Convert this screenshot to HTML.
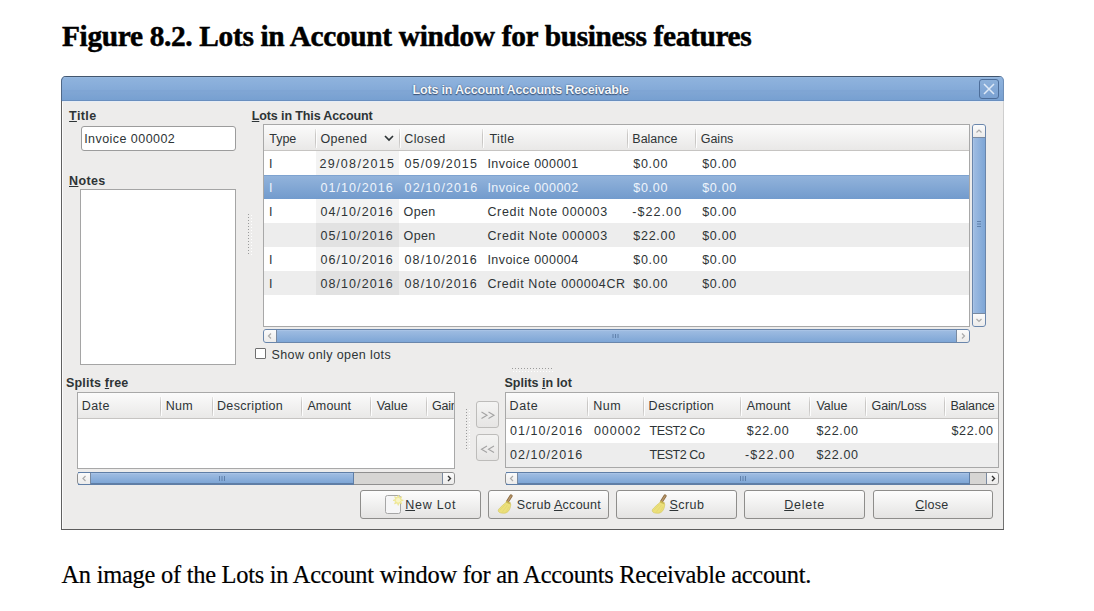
<!DOCTYPE html>
<html><head><meta charset="utf-8"><style>
html,body{margin:0;padding:0;background:#fff;font-family:"Liberation Sans",sans-serif;width:1094px;height:611px;overflow:hidden;position:relative}
div,svg{position:absolute}
.t{position:absolute;white-space:pre}
u{text-decoration:underline;text-underline-offset:1px;text-decoration-thickness:1px}
</style></head><body>
<div style="left:61px;top:90px;width:943px;height:440px;background:#edeceb"></div>
<div style="left:61px;top:90px;width:1px;height:440px;background:#606060"></div>
<div style="left:62px;top:101px;width:1px;height:428px;background:#fbfbfb"></div>
<div style="left:1003px;top:90px;width:1px;height:440px;background:linear-gradient(#d6d6d6,#a0a0a0 40%,#707070)"></div>
<div style="left:61px;top:529px;width:943px;height:1px;background:#5c5c5c"></div>
<div style="left:61px;top:76px;width:943px;height:25px;border-radius:5px 5px 0 0;box-shadow:inset 1px 0 0 #4f6786,inset -1px 0 0 #6f8fb8;background:linear-gradient(#42566e 0,#42566e 1px,#9dbcdf 1px,#8fb3dd 2px,#84aad8 14px,#7fa5d4 14px,#7fa5d4 16px,#80a6d4 16px,#77a0d1 24px,#6a8fbf 24px,#6a8fbf 25px)"></div>
<div style="left:62px;top:101px;width:941px;height:1px;background:#e6edf6"></div>
<div style="left:979px;top:79px;width:20px;height:20px;border:1px solid #4d6e9a;border-radius:3px;box-sizing:border-box;background:linear-gradient(#8cb0da,#7aa1d2)"></div>
<svg style="position:absolute;left:979px;top:79px" width="20" height="20"><path d="M5 5L15 15M15 5L5 15" stroke="#dfeaf7" stroke-width="1.5"/></svg>
<div style="left:81px;top:126px;width:155px;height:25px;background:#fff;border:1px solid #9c9c9c;border-radius:3px;box-sizing:border-box"></div>
<div style="left:80px;top:189px;width:156px;height:176px;background:#fff;border:1px solid #a5a5a5;box-sizing:border-box"></div>
<div style="left:263px;top:124px;width:707px;height:203px;background:#fff;border:1px solid #a8a8a8;box-sizing:border-box"></div>
<div style="left:264px;top:125px;width:705px;height:26px;background:linear-gradient(#fbfbfb,#e9e8e7);border-bottom:1px solid #c6c4c2;box-sizing:border-box"></div>
<div style="left:315px;top:129px;width:1px;height:19px;background:linear-gradient(#e6e5e4,#c9c7c5 30%,#c9c7c5 70%,#dddcdb)"></div>
<div style="left:316px;top:129px;width:1px;height:19px;background:#fdfdfd"></div>
<div style="left:399px;top:129px;width:1px;height:19px;background:linear-gradient(#e6e5e4,#c9c7c5 30%,#c9c7c5 70%,#dddcdb)"></div>
<div style="left:400px;top:129px;width:1px;height:19px;background:#fdfdfd"></div>
<div style="left:482px;top:129px;width:1px;height:19px;background:linear-gradient(#e6e5e4,#c9c7c5 30%,#c9c7c5 70%,#dddcdb)"></div>
<div style="left:483px;top:129px;width:1px;height:19px;background:#fdfdfd"></div>
<div style="left:627px;top:129px;width:1px;height:19px;background:linear-gradient(#e6e5e4,#c9c7c5 30%,#c9c7c5 70%,#dddcdb)"></div>
<div style="left:628px;top:129px;width:1px;height:19px;background:#fdfdfd"></div>
<div style="left:695px;top:129px;width:1px;height:19px;background:linear-gradient(#e6e5e4,#c9c7c5 30%,#c9c7c5 70%,#dddcdb)"></div>
<div style="left:696px;top:129px;width:1px;height:19px;background:#fdfdfd"></div>
<div style="left:264px;top:151px;width:705px;height:24px;background:#ffffff"></div>
<div style="left:316px;top:151px;width:83px;height:24px;background:#f3f3f3"></div>
<div style="left:264px;top:175px;width:705px;height:24px;background:linear-gradient(#92b3db,#729bcd);border-top:1px solid #7ea3d0;box-sizing:border-box"></div>
<div style="left:264px;top:199px;width:705px;height:24px;background:#ffffff"></div>
<div style="left:316px;top:199px;width:83px;height:24px;background:#f3f3f3"></div>
<div style="left:264px;top:223px;width:705px;height:24px;background:#ededed"></div>
<div style="left:316px;top:223px;width:83px;height:24px;background:#e2e2e2"></div>
<div style="left:264px;top:247px;width:705px;height:24px;background:#ffffff"></div>
<div style="left:316px;top:247px;width:83px;height:24px;background:#f3f3f3"></div>
<div style="left:264px;top:271px;width:705px;height:24px;background:#ededed"></div>
<div style="left:316px;top:271px;width:83px;height:24px;background:#e2e2e2"></div>
<svg style="position:absolute;left:383px;top:133px" width="12" height="10"><path d="M2 3L6 7L10 3" stroke="#2e3436" stroke-width="1.7" fill="none"/></svg>
<div style="left:972px;top:124px;width:14px;height:203px;border:1px solid #6a86ab;border-radius:3px;box-sizing:border-box;background:linear-gradient(90deg,#b3cbea,#9dbbe1 1px,#7ea6d6)"></div>
<div style="left:973px;top:125px;width:12px;height:13px;background:linear-gradient(#fbfbfb,#ecebea);border-bottom:1px solid #7a8aa0;border-radius:2px 2px 0 0;box-sizing:border-box"></div>
<div style="left:973px;top:313px;width:12px;height:13px;background:linear-gradient(#fbfbfb,#ecebea);border-top:1px solid #7a8aa0;border-radius:0 0 2px 2px;box-sizing:border-box"></div>
<svg style="position:absolute;left:972px;top:124px" width="14" height="203"><path d="M4.5 8.5L7 6L9.5 8.5" stroke="#aaa" stroke-width="1.2" fill="none"/><path d="M4.5 195L7 197.5L9.5 195" stroke="#aaa" stroke-width="1.2" fill="none"/><path d="M5 97.5H9M5 100H9M5 102.5H9" stroke="#5a7aa5" stroke-width="0.9"/></svg>
<div style="left:263px;top:329px;width:707px;height:14px;border:1px solid #6a86ab;border-radius:3px;box-sizing:border-box;background:linear-gradient(#b3cbea,#9dbbe1 1px,#7ea6d6)"></div>
<div style="left:264px;top:330px;width:13px;height:12px;background:linear-gradient(#fbfbfb,#ecebea);border-right:1px solid #7a8aa0;border-radius:2px 0 0 2px;box-sizing:border-box"></div>
<div style="left:956px;top:330px;width:13px;height:12px;background:linear-gradient(#fbfbfb,#ecebea);border-left:1px solid #7a8aa0;border-radius:0 2px 2px 0;box-sizing:border-box"></div>
<svg style="position:absolute;left:263px;top:329px" width="707" height="14"><path d="M8 4.5L5.5 7L8 9.5" stroke="#aaa" stroke-width="1.2" fill="none"/><path d="M699 4.5L701.5 7L699 9.5" stroke="#aaa" stroke-width="1.2" fill="none"/><path d="M350 5V9M352.5 5V9M355 5V9" stroke="#5a7aa5" stroke-width="0.9"/></svg>
<svg style="position:absolute;left:248px;top:214px" width="4" height="42"><path d="M0.5 0V42" stroke="#9a9a9a" stroke-width="1" stroke-dasharray="1 2"/><path d="M3.5 1V42" stroke="#ffffff" stroke-width="1" stroke-dasharray="1 2"/></svg>
<div style="left:255px;top:348px;width:11px;height:11px;background:#fff;border:1px solid #6f6f6f;border-radius:1px;box-sizing:border-box"></div>
<div style="left:77px;top:392px;width:378px;height:77px;background:#fff;border:1px solid #a8a8a8;box-sizing:border-box"></div>
<div style="left:78px;top:393px;width:376px;height:26px;background:linear-gradient(#fbfbfb,#e9e8e7);border-bottom:1px solid #c6c4c2;box-sizing:border-box"></div>
<div style="left:160px;top:397px;width:1px;height:19px;background:linear-gradient(#e6e5e4,#c9c7c5 30%,#c9c7c5 70%,#dddcdb)"></div>
<div style="left:161px;top:397px;width:1px;height:19px;background:#fdfdfd"></div>
<div style="left:212px;top:397px;width:1px;height:19px;background:linear-gradient(#e6e5e4,#c9c7c5 30%,#c9c7c5 70%,#dddcdb)"></div>
<div style="left:213px;top:397px;width:1px;height:19px;background:#fdfdfd"></div>
<div style="left:301px;top:397px;width:1px;height:19px;background:linear-gradient(#e6e5e4,#c9c7c5 30%,#c9c7c5 70%,#dddcdb)"></div>
<div style="left:302px;top:397px;width:1px;height:19px;background:#fdfdfd"></div>
<div style="left:370px;top:397px;width:1px;height:19px;background:linear-gradient(#e6e5e4,#c9c7c5 30%,#c9c7c5 70%,#dddcdb)"></div>
<div style="left:371px;top:397px;width:1px;height:19px;background:#fdfdfd"></div>
<div style="left:426px;top:397px;width:1px;height:19px;background:linear-gradient(#e6e5e4,#c9c7c5 30%,#c9c7c5 70%,#dddcdb)"></div>
<div style="left:427px;top:397px;width:1px;height:19px;background:#fdfdfd"></div>
<div style="left:77px;top:472px;width:378px;height:13px;border:1px solid #8f8f8f;border-radius:3px;box-sizing:border-box;background:#d6d5d3"></div>
<div style="left:78px;top:472px;width:276px;height:13px;background:linear-gradient(#5f7ea6 0,#5f7ea6 1px,#b3cbea 1px,#9dbbe1 2px,#7ea6d6 11px,#5f7ea6 11px);border-right:1px solid #5f7ea6;box-sizing:border-box"></div>
<div style="left:78px;top:473px;width:13px;height:11px;background:linear-gradient(#fbfbfb,#ecebea);border-right:1px solid #7a8aa0;border-radius:2px 0 0 2px;box-sizing:border-box"></div>
<div style="left:442px;top:473px;width:12px;height:11px;background:linear-gradient(#fbfbfb,#ecebea);border-left:1px solid #7a8aa0;border-radius:0 2px 2px 0;box-sizing:border-box"></div>
<svg style="position:absolute;left:77px;top:472px" width="378" height="13"><path d="M8.5 4L6 6.5L8.5 9" stroke="#aaa" stroke-width="1.2" fill="none"/><path d="M371 4L373.5 6.5L371 9" stroke="#333" stroke-width="1.4" fill="none"/><path d="M142.5 4V9M145 4V9M147.5 4V9" stroke="#5a7aa5" stroke-width="0.9"/></svg>
<div style="left:476px;top:401px;width:23px;height:27px;border:1px solid #bdbcba;border-radius:3px;box-sizing:border-box;background:linear-gradient(#f4f4f3,#e6e5e4)"></div>
<div style="left:476px;top:434px;width:23px;height:27px;border:1px solid #bdbcba;border-radius:3px;box-sizing:border-box;background:linear-gradient(#f4f4f3,#e6e5e4)"></div>
<svg style="position:absolute;left:476px;top:401px" width="24" height="60"><path d="M5.5 11L11 14.2L5.5 17.4M12.5 11L18 14.2L12.5 17.4" stroke="#a3a3a3" stroke-width="1.1" fill="none"/><path d="M11 45L5.5 48.2L11 51.4M18 45L12.5 48.2L18 51.4" stroke="#a3a3a3" stroke-width="1.1" fill="none"/></svg>
<svg style="position:absolute;left:466px;top:409px" width="4" height="41"><path d="M0.5 0V41" stroke="#9a9a9a" stroke-width="1" stroke-dasharray="1 2"/><path d="M3.5 1V41" stroke="#ffffff" stroke-width="1" stroke-dasharray="1 2"/></svg>
<svg style="position:absolute;left:512px;top:368px" width="42" height="4"><path d="M0 0.5H42" stroke="#9a9a9a" stroke-width="1" stroke-dasharray="1 2"/><path d="M1 3.5H42" stroke="#ffffff" stroke-width="1" stroke-dasharray="1 2"/></svg>
<div style="left:505px;top:392px;width:494px;height:76px;background:#fff;border:1px solid #a8a8a8;box-sizing:border-box"></div>
<div style="left:506px;top:393px;width:492px;height:26px;background:linear-gradient(#fbfbfb,#e9e8e7);border-bottom:1px solid #c6c4c2;box-sizing:border-box"></div>
<div style="left:506px;top:443px;width:492px;height:24px;background:#ededed"></div>
<div style="left:587px;top:397px;width:1px;height:19px;background:linear-gradient(#e6e5e4,#c9c7c5 30%,#c9c7c5 70%,#dddcdb)"></div>
<div style="left:588px;top:397px;width:1px;height:19px;background:#fdfdfd"></div>
<div style="left:643px;top:397px;width:1px;height:19px;background:linear-gradient(#e6e5e4,#c9c7c5 30%,#c9c7c5 70%,#dddcdb)"></div>
<div style="left:644px;top:397px;width:1px;height:19px;background:#fdfdfd"></div>
<div style="left:740px;top:397px;width:1px;height:19px;background:linear-gradient(#e6e5e4,#c9c7c5 30%,#c9c7c5 70%,#dddcdb)"></div>
<div style="left:741px;top:397px;width:1px;height:19px;background:#fdfdfd"></div>
<div style="left:809px;top:397px;width:1px;height:19px;background:linear-gradient(#e6e5e4,#c9c7c5 30%,#c9c7c5 70%,#dddcdb)"></div>
<div style="left:810px;top:397px;width:1px;height:19px;background:#fdfdfd"></div>
<div style="left:865px;top:397px;width:1px;height:19px;background:linear-gradient(#e6e5e4,#c9c7c5 30%,#c9c7c5 70%,#dddcdb)"></div>
<div style="left:866px;top:397px;width:1px;height:19px;background:#fdfdfd"></div>
<div style="left:944px;top:397px;width:1px;height:19px;background:linear-gradient(#e6e5e4,#c9c7c5 30%,#c9c7c5 70%,#dddcdb)"></div>
<div style="left:945px;top:397px;width:1px;height:19px;background:#fdfdfd"></div>
<div style="left:505px;top:472px;width:494px;height:13px;border:1px solid #8f8f8f;border-radius:3px;box-sizing:border-box;background:#d6d5d3"></div>
<div style="left:506px;top:472px;width:464px;height:13px;background:linear-gradient(#5f7ea6 0,#5f7ea6 1px,#b3cbea 1px,#9dbbe1 2px,#7ea6d6 11px,#5f7ea6 11px);border-right:1px solid #5f7ea6;box-sizing:border-box"></div>
<div style="left:506px;top:473px;width:12px;height:11px;background:linear-gradient(#fbfbfb,#ecebea);border-right:1px solid #7a8aa0;border-radius:2px 0 0 2px;box-sizing:border-box"></div>
<div style="left:986px;top:473px;width:12px;height:11px;background:linear-gradient(#fbfbfb,#ecebea);border-left:1px solid #7a8aa0;border-radius:0 2px 2px 0;box-sizing:border-box"></div>
<svg style="position:absolute;left:505px;top:472px" width="494" height="13"><path d="M8 4L5.5 6.5L8 9" stroke="#aaa" stroke-width="1.2" fill="none"/><path d="M487 4L489.5 6.5L487 9" stroke="#333" stroke-width="1.4" fill="none"/><path d="M235.5 4V9M238 4V9M240.5 4V9" stroke="#5a7aa5" stroke-width="0.9"/></svg>
<div style="left:360px;top:490px;width:121px;height:29px;border:1px solid #8e8d8b;border-radius:3px;box-sizing:border-box;background:linear-gradient(#fdfdfd,#e4e3e2)"></div>
<div style="left:488px;top:490px;width:121px;height:29px;border:1px solid #8e8d8b;border-radius:3px;box-sizing:border-box;background:linear-gradient(#fdfdfd,#e4e3e2)"></div>
<div style="left:616px;top:490px;width:121px;height:29px;border:1px solid #8e8d8b;border-radius:3px;box-sizing:border-box;background:linear-gradient(#fdfdfd,#e4e3e2)"></div>
<div style="left:744px;top:490px;width:121px;height:29px;border:1px solid #8e8d8b;border-radius:3px;box-sizing:border-box;background:linear-gradient(#fdfdfd,#e4e3e2)"></div>
<div style="left:873px;top:490px;width:120px;height:29px;border:1px solid #8e8d8b;border-radius:3px;box-sizing:border-box;background:linear-gradient(#fdfdfd,#e4e3e2)"></div>
<svg style="position:absolute;left:384px;top:494px" width="22" height="22"><rect x="1.5" y="1.5" width="15" height="18" rx="2" fill="#f6f6f7" stroke="#a6a6a6" stroke-width="1"/><polygon points="19.40,6.30 16.79,7.37 17.88,9.98 15.27,8.89 14.20,11.50 13.13,8.89 10.52,9.98 11.61,7.37 9.00,6.30 11.61,5.23 10.52,2.62 13.13,3.71 14.20,1.10 15.27,3.71 17.88,2.62 16.79,5.23" fill="#f2ec9a" stroke="#e8de80" stroke-width="0.5"/><circle cx="14.2" cy="6.3" r="2.2" fill="#f8f4c8"/></svg>
<svg style="position:absolute;left:496px;top:494px" width="18" height="22"><path d="M15.1 1.9L11.7 7.3" stroke="#8a6a40" stroke-width="3" stroke-linecap="round"/><path d="M15.1 1.9L11.7 7.3" stroke="#b8976a" stroke-width="1.4" stroke-linecap="round"/><path d="M10.2 8.2 L14.8 10.2 C14.8 13 13.5 16 12.2 17.4 C11 18.6 9.5 19.2 8 19.2 C6 19.2 4.5 19 3.5 18.5 C2.3 17.8 2 16.5 2.5 15.5 C4.5 13 7.5 10.5 10.2 8.2 Z" fill="#ece07a" stroke="#d2c45a" stroke-width="0.6"/><path d="M10 7.5L14.6 9.6" stroke="#c9b850" stroke-width="1.6"/><path d="M11.5 11L6 18.5M13 12.5L9.5 18.8M9.5 10.5L3.5 16.5" stroke="#ddd070" stroke-width="0.5"/></svg>
<svg style="position:absolute;left:650px;top:494px" width="18" height="22"><path d="M15.1 1.9L11.7 7.3" stroke="#8a6a40" stroke-width="3" stroke-linecap="round"/><path d="M15.1 1.9L11.7 7.3" stroke="#b8976a" stroke-width="1.4" stroke-linecap="round"/><path d="M10.2 8.2 L14.8 10.2 C14.8 13 13.5 16 12.2 17.4 C11 18.6 9.5 19.2 8 19.2 C6 19.2 4.5 19 3.5 18.5 C2.3 17.8 2 16.5 2.5 15.5 C4.5 13 7.5 10.5 10.2 8.2 Z" fill="#ece07a" stroke="#d2c45a" stroke-width="0.6"/><path d="M10 7.5L14.6 9.6" stroke="#c9b850" stroke-width="1.6"/><path d="M11.5 11L6 18.5M13 12.5L9.5 18.8M9.5 10.5L3.5 16.5" stroke="#ddd070" stroke-width="0.5"/></svg>
<span class="t" style="left:62.00px;top:22.08px;font:bold 29.4px/29.4px 'Liberation Serif',serif;color:#000;letter-spacing:-0.345px;-webkit-text-stroke:0.5px #000;">Figure 8.2. Lots in Account window for business features</span>
<span class="t" style="left:61.50px;top:563.27px;font:normal 24.4px/24.4px 'Liberation Serif',serif;color:#000;letter-spacing:-0.240px;-webkit-text-stroke:0.2px #000;">An image of the Lots in Account window for an Accounts Receivable account.</span>
<span class="t" style="left:412.60px;top:84.32px;font:bold 12.5px/12.5px 'Liberation Sans',sans-serif;color:#f4f7fb;letter-spacing:-0.188px;text-shadow:0 0 1.5px #3b5477,0 1px 1px #3b5477;">Lots in Account Accounts Receivable</span>
<span class="t" style="left:69.10px;top:109.82px;font:bold 12.5px/12.5px 'Liberation Sans',sans-serif;color:#2e3436;letter-spacing:0.400px;"><u>T</u>itle</span>
<span class="t" style="left:251.80px;top:109.72px;font:bold 12.5px/12.5px 'Liberation Sans',sans-serif;color:#2e3436;letter-spacing:-0.121px;"><u>L</u>ots in This Account</span>
<span class="t" style="left:69.00px;top:174.82px;font:bold 12.5px/12.5px 'Liberation Sans',sans-serif;color:#2e3436;letter-spacing:0.375px;"><u>N</u>otes</span>
<span class="t" style="left:84.20px;top:133.02px;font:normal 12.5px/12.5px 'Liberation Sans',sans-serif;color:#2e3436;letter-spacing:0.446px;">Invoice 000002</span>
<span class="t" style="left:269.20px;top:133.02px;font:normal 12.5px/12.5px 'Liberation Sans',sans-serif;color:#2e3436;letter-spacing:0.000px;">Type</span>
<span class="t" style="left:320.40px;top:133.02px;font:normal 12.5px/12.5px 'Liberation Sans',sans-serif;color:#2e3436;letter-spacing:0.400px;">Opened</span>
<span class="t" style="left:404.20px;top:133.02px;font:normal 12.5px/12.5px 'Liberation Sans',sans-serif;color:#2e3436;letter-spacing:0.420px;">Closed</span>
<span class="t" style="left:489.50px;top:133.02px;font:normal 12.5px/12.5px 'Liberation Sans',sans-serif;color:#2e3436;letter-spacing:0.375px;">Title</span>
<span class="t" style="left:632.30px;top:133.02px;font:normal 12.5px/12.5px 'Liberation Sans',sans-serif;color:#2e3436;letter-spacing:0.000px;">Balance</span>
<span class="t" style="left:700.70px;top:133.02px;font:normal 12.5px/12.5px 'Liberation Sans',sans-serif;color:#2e3436;letter-spacing:0.000px;">Gains</span>
<span class="t" style="left:268.90px;top:158.02px;font:normal 12.5px/12.5px 'Liberation Sans',sans-serif;color:#2e3436;letter-spacing:0.000px;">I</span>
<span class="t" style="left:319.50px;top:158.02px;font:normal 12.5px/12.5px 'Liberation Sans',sans-serif;color:#2e3436;letter-spacing:1.322px;">29/08/2015</span>
<span class="t" style="left:404.60px;top:158.02px;font:normal 12.5px/12.5px 'Liberation Sans',sans-serif;color:#2e3436;letter-spacing:1.078px;">05/09/2015</span>
<span class="t" style="left:487.40px;top:158.02px;font:normal 12.5px/12.5px 'Liberation Sans',sans-serif;color:#2e3436;letter-spacing:0.462px;">Invoice 000001</span>
<span class="t" style="left:633.30px;top:158.02px;font:normal 12.5px/12.5px 'Liberation Sans',sans-serif;color:#2e3436;letter-spacing:0.700px;">$0.00</span>
<span class="t" style="left:702.20px;top:158.02px;font:normal 12.5px/12.5px 'Liberation Sans',sans-serif;color:#2e3436;letter-spacing:0.700px;">$0.00</span>
<span class="t" style="left:268.90px;top:182.02px;font:normal 12.5px/12.5px 'Liberation Sans',sans-serif;color:#eef4fb;letter-spacing:0.000px;">I</span>
<span class="t" style="left:320.50px;top:182.02px;font:normal 12.5px/12.5px 'Liberation Sans',sans-serif;color:#eef4fb;letter-spacing:1.067px;">01/10/2016</span>
<span class="t" style="left:404.60px;top:182.02px;font:normal 12.5px/12.5px 'Liberation Sans',sans-serif;color:#eef4fb;letter-spacing:1.111px;">02/10/2016</span>
<span class="t" style="left:487.40px;top:182.02px;font:normal 12.5px/12.5px 'Liberation Sans',sans-serif;color:#eef4fb;letter-spacing:0.462px;">Invoice 000002</span>
<span class="t" style="left:633.30px;top:182.02px;font:normal 12.5px/12.5px 'Liberation Sans',sans-serif;color:#eef4fb;letter-spacing:0.700px;">$0.00</span>
<span class="t" style="left:702.20px;top:182.02px;font:normal 12.5px/12.5px 'Liberation Sans',sans-serif;color:#eef4fb;letter-spacing:0.700px;">$0.00</span>
<span class="t" style="left:268.90px;top:206.02px;font:normal 12.5px/12.5px 'Liberation Sans',sans-serif;color:#2e3436;letter-spacing:0.000px;">I</span>
<span class="t" style="left:320.50px;top:206.02px;font:normal 12.5px/12.5px 'Liberation Sans',sans-serif;color:#2e3436;letter-spacing:1.067px;">04/10/2016</span>
<span class="t" style="left:403.60px;top:206.02px;font:normal 12.5px/12.5px 'Liberation Sans',sans-serif;color:#2e3436;letter-spacing:0.333px;">Open</span>
<span class="t" style="left:487.40px;top:206.02px;font:normal 12.5px/12.5px 'Liberation Sans',sans-serif;color:#2e3436;letter-spacing:0.665px;">Credit Note 000003</span>
<span class="t" style="left:632.30px;top:206.02px;font:normal 12.5px/12.5px 'Liberation Sans',sans-serif;color:#2e3436;letter-spacing:1.067px;">-$22.00</span>
<span class="t" style="left:702.20px;top:206.02px;font:normal 12.5px/12.5px 'Liberation Sans',sans-serif;color:#2e3436;letter-spacing:0.700px;">$0.00</span>
<span class="t" style="left:320.50px;top:230.02px;font:normal 12.5px/12.5px 'Liberation Sans',sans-serif;color:#2e3436;letter-spacing:1.067px;">05/10/2016</span>
<span class="t" style="left:403.60px;top:230.02px;font:normal 12.5px/12.5px 'Liberation Sans',sans-serif;color:#2e3436;letter-spacing:0.333px;">Open</span>
<span class="t" style="left:487.40px;top:230.02px;font:normal 12.5px/12.5px 'Liberation Sans',sans-serif;color:#2e3436;letter-spacing:0.665px;">Credit Note 000003</span>
<span class="t" style="left:633.30px;top:230.02px;font:normal 12.5px/12.5px 'Liberation Sans',sans-serif;color:#2e3436;letter-spacing:0.740px;">$22.00</span>
<span class="t" style="left:702.20px;top:230.02px;font:normal 12.5px/12.5px 'Liberation Sans',sans-serif;color:#2e3436;letter-spacing:0.700px;">$0.00</span>
<span class="t" style="left:268.90px;top:254.02px;font:normal 12.5px/12.5px 'Liberation Sans',sans-serif;color:#2e3436;letter-spacing:0.000px;">I</span>
<span class="t" style="left:320.50px;top:254.02px;font:normal 12.5px/12.5px 'Liberation Sans',sans-serif;color:#2e3436;letter-spacing:1.067px;">06/10/2016</span>
<span class="t" style="left:404.60px;top:254.02px;font:normal 12.5px/12.5px 'Liberation Sans',sans-serif;color:#2e3436;letter-spacing:1.067px;">08/10/2016</span>
<span class="t" style="left:487.40px;top:254.02px;font:normal 12.5px/12.5px 'Liberation Sans',sans-serif;color:#2e3436;letter-spacing:0.462px;">Invoice 000004</span>
<span class="t" style="left:633.30px;top:254.02px;font:normal 12.5px/12.5px 'Liberation Sans',sans-serif;color:#2e3436;letter-spacing:0.700px;">$0.00</span>
<span class="t" style="left:702.20px;top:254.02px;font:normal 12.5px/12.5px 'Liberation Sans',sans-serif;color:#2e3436;letter-spacing:0.700px;">$0.00</span>
<span class="t" style="left:268.90px;top:278.02px;font:normal 12.5px/12.5px 'Liberation Sans',sans-serif;color:#2e3436;letter-spacing:0.000px;">I</span>
<span class="t" style="left:320.50px;top:278.02px;font:normal 12.5px/12.5px 'Liberation Sans',sans-serif;color:#2e3436;letter-spacing:1.067px;">08/10/2016</span>
<span class="t" style="left:404.60px;top:278.02px;font:normal 12.5px/12.5px 'Liberation Sans',sans-serif;color:#2e3436;letter-spacing:1.067px;">08/10/2016</span>
<span class="t" style="left:487.40px;top:278.02px;font:normal 12.5px/12.5px 'Liberation Sans',sans-serif;color:#2e3436;letter-spacing:0.589px;">Credit Note 000004CR</span>
<span class="t" style="left:633.30px;top:278.02px;font:normal 12.5px/12.5px 'Liberation Sans',sans-serif;color:#2e3436;letter-spacing:0.700px;">$0.00</span>
<span class="t" style="left:702.20px;top:278.02px;font:normal 12.5px/12.5px 'Liberation Sans',sans-serif;color:#2e3436;letter-spacing:0.700px;">$0.00</span>
<span class="t" style="left:271.50px;top:348.72px;font:normal 12.5px/12.5px 'Liberation Sans',sans-serif;color:#2e3436;letter-spacing:0.406px;">Show only open lots</span>
<span class="t" style="left:66.00px;top:376.62px;font:bold 12.5px/12.5px 'Liberation Sans',sans-serif;color:#2e3436;letter-spacing:0.180px;">Splits <u>f</u>ree</span>
<span class="t" style="left:81.70px;top:400.22px;font:normal 12.5px/12.5px 'Liberation Sans',sans-serif;color:#2e3436;letter-spacing:0.433px;">Date</span>
<span class="t" style="left:165.70px;top:400.22px;font:normal 12.5px/12.5px 'Liberation Sans',sans-serif;color:#2e3436;letter-spacing:0.350px;">Num</span>
<span class="t" style="left:217.00px;top:400.22px;font:normal 12.5px/12.5px 'Liberation Sans',sans-serif;color:#2e3436;letter-spacing:0.330px;">Description</span>
<span class="t" style="left:307.40px;top:400.22px;font:normal 12.5px/12.5px 'Liberation Sans',sans-serif;color:#2e3436;letter-spacing:0.120px;">Amount</span>
<span class="t" style="left:376.70px;top:400.22px;font:normal 12.5px/12.5px 'Liberation Sans',sans-serif;color:#2e3436;letter-spacing:0.000px;">Value</span>
<div style="left:428px;top:396px;width:26px;height:20px;overflow:hidden"><span class="t" style="left:3.90px;top:4.22px;font:normal 12.5px/12.5px 'Liberation Sans',sans-serif;color:#2e3436;letter-spacing:-0.175px;">Gain/Loss</span></div>
<span class="t" style="left:504.50px;top:376.62px;font:bold 12.5px/12.5px 'Liberation Sans',sans-serif;color:#2e3436;letter-spacing:0.000px;">Splits <u>i</u>n lot</span>
<span class="t" style="left:509.50px;top:400.22px;font:normal 12.5px/12.5px 'Liberation Sans',sans-serif;color:#2e3436;letter-spacing:0.600px;">Date</span>
<span class="t" style="left:593.30px;top:400.22px;font:normal 12.5px/12.5px 'Liberation Sans',sans-serif;color:#2e3436;letter-spacing:0.450px;">Num</span>
<span class="t" style="left:648.60px;top:400.22px;font:normal 12.5px/12.5px 'Liberation Sans',sans-serif;color:#2e3436;letter-spacing:0.270px;">Description</span>
<span class="t" style="left:746.80px;top:400.22px;font:normal 12.5px/12.5px 'Liberation Sans',sans-serif;color:#2e3436;letter-spacing:0.140px;">Amount</span>
<span class="t" style="left:816.40px;top:400.22px;font:normal 12.5px/12.5px 'Liberation Sans',sans-serif;color:#2e3436;letter-spacing:0.000px;">Value</span>
<span class="t" style="left:871.60px;top:400.22px;font:normal 12.5px/12.5px 'Liberation Sans',sans-serif;color:#2e3436;letter-spacing:-0.175px;">Gain/Loss</span>
<span class="t" style="left:950.40px;top:400.22px;font:normal 12.5px/12.5px 'Liberation Sans',sans-serif;color:#2e3436;letter-spacing:-0.133px;">Balance</span>
<span class="t" style="left:509.90px;top:425.02px;font:normal 12.5px/12.5px 'Liberation Sans',sans-serif;color:#2e3436;letter-spacing:1.078px;">01/10/2016</span>
<span class="t" style="left:593.90px;top:425.02px;font:normal 12.5px/12.5px 'Liberation Sans',sans-serif;color:#2e3436;letter-spacing:0.980px;">000002</span>
<span class="t" style="left:649.60px;top:425.02px;font:normal 12.5px/12.5px 'Liberation Sans',sans-serif;color:#2e3436;letter-spacing:-0.443px;">TEST2 Co</span>
<span class="t" style="left:746.80px;top:425.02px;font:normal 12.5px/12.5px 'Liberation Sans',sans-serif;color:#2e3436;letter-spacing:0.740px;">$22.00</span>
<span class="t" style="left:816.40px;top:425.02px;font:normal 12.5px/12.5px 'Liberation Sans',sans-serif;color:#2e3436;letter-spacing:0.680px;">$22.00</span>
<span class="t" style="left:951.40px;top:425.02px;font:normal 12.5px/12.5px 'Liberation Sans',sans-serif;color:#2e3436;letter-spacing:0.680px;">$22.00</span>
<span class="t" style="left:509.90px;top:449.12px;font:normal 12.5px/12.5px 'Liberation Sans',sans-serif;color:#2e3436;letter-spacing:1.078px;">02/10/2016</span>
<span class="t" style="left:649.60px;top:449.12px;font:normal 12.5px/12.5px 'Liberation Sans',sans-serif;color:#2e3436;letter-spacing:-0.443px;">TEST2 Co</span>
<span class="t" style="left:745.00px;top:449.12px;font:normal 12.5px/12.5px 'Liberation Sans',sans-serif;color:#2e3436;letter-spacing:1.117px;">-$22.00</span>
<span class="t" style="left:816.40px;top:449.12px;font:normal 12.5px/12.5px 'Liberation Sans',sans-serif;color:#2e3436;letter-spacing:0.680px;">$22.00</span>
<span class="t" style="left:405.30px;top:499.02px;font:normal 12.5px/12.5px 'Liberation Sans',sans-serif;color:#2e3436;letter-spacing:0.717px;"><u>N</u>ew Lot</span>
<span class="t" style="left:516.80px;top:499.02px;font:normal 12.5px/12.5px 'Liberation Sans',sans-serif;color:#2e3436;letter-spacing:0.283px;">Scrub <u>A</u>ccount</span>
<span class="t" style="left:669.50px;top:499.22px;font:normal 12.5px/12.5px 'Liberation Sans',sans-serif;color:#2e3436;letter-spacing:0.450px;"><u>S</u>crub</span>
<span class="t" style="left:784.20px;top:499.02px;font:normal 12.5px/12.5px 'Liberation Sans',sans-serif;color:#2e3436;letter-spacing:0.800px;"><u>D</u>elete</span>
<span class="t" style="left:915.30px;top:498.82px;font:normal 12.5px/12.5px 'Liberation Sans',sans-serif;color:#2e3436;letter-spacing:0.250px;"><u>C</u>lose</span>
</body></html>
